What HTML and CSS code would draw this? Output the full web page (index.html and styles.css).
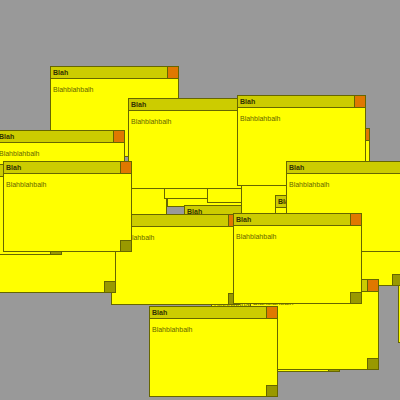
FILE: index.html
```html
<!DOCTYPE html>
<html lang="en">
<head>
    <meta charset="UTF-8">
    <title>Notes</title>
    <link rel="stylesheet" href="styles.css">
</head>
<body>
    <div class="desk">
        <!-- notes in stacking order, bottom first -->
        <div class="note n01"><div class="note-title">Blah<span class="note-close"></span></div><div class="note-body">Blahblahbalh</div><span class="note-grip"></span></div>
        <div class="note n02"><div class="note-title">Blah<span class="note-close"></span></div><div class="note-body">Blahblahbalh</div><span class="note-grip"></span></div>
        <div class="note n03"><div class="note-title">Blah<span class="note-close"></span></div><div class="note-body">Blahblahbalh</div><span class="note-grip"></span></div>
        <div class="note n04"><div class="note-title">Blah<span class="note-close"></span></div><div class="note-body">Blahblahbalh</div><span class="note-grip"></span></div>
        <div class="note n05"><div class="note-title">Blah<span class="note-close"></span></div><div class="note-body">Blahblahbalh</div><span class="note-grip"></span></div>
        <div class="note n06"><div class="note-title">Blah<span class="note-close"></span></div><div class="note-body">Blahblahbalh</div><span class="note-grip"></span></div>
        <div class="note n07"><div class="note-title">Blah<span class="note-close"></span></div><div class="note-body">Blahblahbalh</div><span class="note-grip"></span></div>
        <div class="note n08"><div class="note-title">Blah<span class="note-close"></span></div><div class="note-body">Blahblahbalh</div><span class="note-grip"></span></div>
        <div class="note n09"><div class="note-title">Blah<span class="note-close"></span></div><div class="note-body">Blahblahbalh</div><span class="note-grip"></span></div>
        <div class="note n10"><div class="note-title">Blah<span class="note-close"></span></div><div class="note-body">Blahblahbalh</div><span class="note-grip"></span></div>
        <div class="note n11"><div class="note-title">Blah<span class="note-close"></span></div><div class="note-body">Blahblahbalh</div><span class="note-grip"></span></div>
        <div class="note n12"><div class="note-title">Blah<span class="note-close"></span></div><div class="note-body">Blahblahbalh</div><span class="note-grip"></span></div>
        <div class="note n13"><div class="note-title">Blah<span class="note-close"></span></div><div class="note-body">Blahblahbalh</div><span class="note-grip"></span></div>
        <div class="note n14"><div class="note-title">Blah<span class="note-close"></span></div><div class="note-body">Blahblahbalh</div><span class="note-grip"></span></div>
        <div class="note n15"><div class="note-title">Blah<span class="note-close"></span></div><div class="note-body">Blahblahbalh</div><span class="note-grip"></span></div>
        <div class="note n16"><div class="note-title">Blah<span class="note-close"></span></div><div class="note-body">Blahblahbalh</div><span class="note-grip"></span></div>
        <div class="note n17"><div class="note-title">Blah<span class="note-close"></span></div><div class="note-body">Blahblahbalh</div><span class="note-grip"></span></div>
        <div class="note n18"><div class="note-title">Blah<span class="note-close"></span></div><div class="note-body">Blahblahbalh</div><span class="note-grip"></span></div>
        <div class="note n19"><div class="note-title">Blah<span class="note-close"></span></div><div class="note-body">Blahblahbalh</div><span class="note-grip"></span></div>
        <div class="note n20"><div class="note-title">Blah<span class="note-close"></span></div><div class="note-body">Blahblahbalh</div><span class="note-grip"></span></div>
        <div class="note n21"><div class="note-title">Blah<span class="note-close"></span></div><div class="note-body">Blahblahbalh</div><span class="note-grip"></span></div>
    </div>
</body>
</html>
```
FILE: styles.css
```css
body {
    margin: 0;
    background: #999999;
    font-family: "Liberation Sans", Arial, sans-serif;
}
.desk {
    position: relative;
    width: 400px;
    height: 400px;
    overflow: hidden;
    background: #999999;
}
.note {
    position: absolute;
    width: 129px;
    height: 91px;
    box-sizing: border-box;
    background: #ffff00;
    border: 1px solid #666600;
}
.note-title {
    position: relative;
    height: 12px;
    box-sizing: border-box;
    padding-left: 2px;
    background: #cccc00;
    border-bottom: 1px solid #666600;
    color: #333300;
    font-size: 7px;
    font-weight: bold;
    line-height: 11px;
}
.note-close {
    position: absolute;
    top: -1px;
    right: -1px;
    width: 12px;
    height: 13px;
    box-sizing: border-box;
    background: #e07800;
    border: 1px solid #666600;
}
.note-body {
    padding: 7px 2px;
    color: #666600;
    font-size: 7px;
    line-height: 8px;
}
.note-grip {
    position: absolute;
    right: -1px;
    bottom: -1px;
    width: 12px;
    height: 12px;
    box-sizing: border-box;
    background: #999900;
    border: 1px solid #666600;
}
.n01 { left: 398px; top: 252px; }
.n02 { left: 38px; top: 170px; }
.n03 { left: 167px; top: 116px; }
.n04 { left: 164px; top: 108px; }
.n05 { left: 207px; top: 112px; }
.n06 { left: 184px; top: 205px; }
.n07 { left: 50px; top: 66px; }
.n08 { left: -4px; top: 130px; }
.n09 { left: 128px; top: 98px; }
.n10 { left: 241px; top: 128px; }
.n11 { left: 237px; top: 95px; }
.n12 { left: 275px; top: 195px; }
.n13 { left: 286px; top: 161px; }
.n14 { left: 211px; top: 281px; }
.n15 { left: 250px; top: 279px; }
.n16 { left: 111px; top: 214px; }
.n17 { left: -13px; top: 202px; }
.n18 { left: -67px; top: 164px; }
.n19 { left: 3px; top: 161px; }
.n20 { left: 233px; top: 213px; }
.n21 { left: 149px; top: 306px; }
```
